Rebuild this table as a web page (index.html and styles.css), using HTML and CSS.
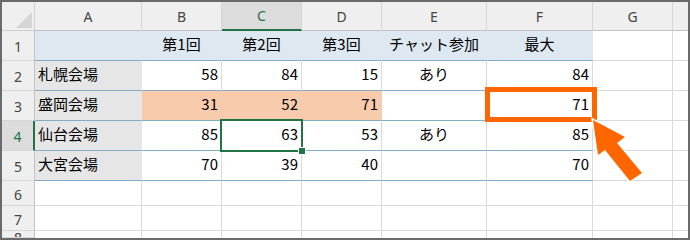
FILE: index.html
```html
<!DOCTYPE html>
<html lang="ja">
<head>
<meta charset="utf-8">
<link rel="stylesheet" href="styles.css">
</head>
<body>
<div class="sheet">
  <div class="grid">
    <div class="c corner"><div class="tri"></div></div>
    <div class="c ch">A</div>
    <div class="c ch">B</div>
    <div class="c ch csel">C</div>
    <div class="c ch">D</div>
    <div class="c ch">E</div>
    <div class="c ch">F</div>
    <div class="c ch">G</div>
    <div class="c ch last"></div>

    <div class="c rh">1</div>
    <div class="c hd"></div>
    <div class="c hd ctr">第1回</div>
    <div class="c hd ctr">第2回</div>
    <div class="c hd ctr">第3回</div>
    <div class="c hd ctr">チャット参加</div>
    <div class="c hd ctr">最大</div>
    <div class="c"></div>
    <div class="c last"></div>

    <div class="c rh">2</div>
    <div class="c lbl">札幌会場</div>
    <div class="c tb num">58</div>
    <div class="c tb num">84</div>
    <div class="c tb num">15</div>
    <div class="c tb ctr">あり</div>
    <div class="c tb num">84</div>
    <div class="c"></div>
    <div class="c last"></div>

    <div class="c rh">3</div>
    <div class="c lbl">盛岡会場</div>
    <div class="c peach num">31</div>
    <div class="c peach num">52</div>
    <div class="c peach num">71</div>
    <div class="c tb"></div>
    <div class="c tb num">71</div>
    <div class="c"></div>
    <div class="c last"></div>

    <div class="c rh rsel">4</div>
    <div class="c lbl">仙台会場</div>
    <div class="c tb num">85</div>
    <div class="c tb num">63</div>
    <div class="c tb num">53</div>
    <div class="c tb ctr">あり</div>
    <div class="c tb num">85</div>
    <div class="c"></div>
    <div class="c last"></div>

    <div class="c rh">5</div>
    <div class="c lbl">大宮会場</div>
    <div class="c tb num">70</div>
    <div class="c tb num">39</div>
    <div class="c tb num">40</div>
    <div class="c tb"></div>
    <div class="c tb num">70</div>
    <div class="c"></div>
    <div class="c last"></div>

    <div class="c rh">6</div>
    <div class="c"></div>
    <div class="c"></div>
    <div class="c"></div>
    <div class="c"></div>
    <div class="c"></div>
    <div class="c"></div>
    <div class="c"></div>
    <div class="c last"></div>

    <div class="c rh">7</div>
    <div class="c"></div>
    <div class="c"></div>
    <div class="c"></div>
    <div class="c"></div>
    <div class="c"></div>
    <div class="c"></div>
    <div class="c"></div>
    <div class="c last"></div>

    <div class="c rh cut"><span>8</span></div>
    <div class="c cutrow"></div>
    <div class="c cutrow"></div>
    <div class="c cutrow"></div>
    <div class="c cutrow"></div>
    <div class="c cutrow"></div>
    <div class="c cutrow"></div>
    <div class="c cutrow"></div>
    <div class="c cutrow last"></div>
  </div>

  <div class="selection"><span class="handle"></span></div>
  <div class="highlight"></div>
  <svg class="arrow" width="690" height="240" viewBox="0 0 690 240">
    <polygon points="593,120 598,155 605,150 630,181 642,173 617,143 625,137" />
  </svg>
</div>
</body>
</html>
```

FILE: styles.css
```css
html, body {
  margin: 0;
  padding: 0;
  background: #ffffff;
}

.sheet {
  position: relative;
  width: 686px;
  height: 236px;
  border: 2px solid #6a6a6a;
  overflow: hidden;
  font-family: "Noto Sans CJK JP", "Noto Sans", sans-serif;
}

.grid {
  display: grid;
  grid-template-columns: 33px 107px 80px 80px 80px 105px 106px 80px 15px;
  grid-template-rows: 29px 30px 30px 30px 30px 30px 25px 25px 7px;
}

.c {
  box-sizing: border-box;
  border-right: 1px solid #dadada;
  border-bottom: 1px solid #dadada;
  display: flex;
  align-items: center;
  padding: 0 3px 3px 3px;
  font-size: 15px;
  line-height: 18px;
  color: #000;
  white-space: nowrap;
  overflow: hidden;
}

.last { border-right: none; }
.cutrow { border-bottom: none; }

.num { justify-content: flex-end; }
.ctr { justify-content: center; }

.corner {
  background: #efefef;
  border-right-color: #cfcfcf;
  border-bottom-color: #cfcfcf;
  justify-content: flex-end;
  align-items: flex-end;
  padding: 0 2px 2px 0;
}

.tri {
  width: 16px;
  height: 16px;
  background: #d5d5d5;
  clip-path: polygon(100% 0, 100% 100%, 0 100%);
}

.ch {
  background: #efefef;
  justify-content: center;
  font-family: "Noto Sans", "Open Sans", sans-serif;
  font-size: 14px;
  color: #444444;
  padding: 1px 0 0 0;
  border-right-color: #d6d6d6;
  border-bottom-color: #c2c2c2;
}

.ch.last { background: #efefef; }

.csel {
  background: #dcdcdc;
  color: #217346;
  border-bottom: 2px solid #217346;
}

.rh {
  background: #efefef;
  justify-content: center;
  font-family: "Noto Sans", "Open Sans", sans-serif;
  font-size: 14px;
  color: #444444;
  padding: 3px 0 0 0;
  border-right-color: #c2c2c2;
  border-bottom-color: #d6d6d6;
}

.rsel {
  background: #dcdcdc;
  color: #217346;
  border-right: 2px solid #217346;
}

.rh.cut {
  align-items: flex-start;
  padding: 0;
}

.rh.cut span {
  display: block;
  margin-top: 0px;
  line-height: 14px;
}

.hd {
  background: #dde8f1;
  border-right-color: #dde8f1;
  border-bottom-color: #86abc6;
}

.lbl {
  background: #e7e6e6;
  border-right-color: #e7e6e6;
  border-bottom-color: #86abc6;
}

.peach {
  background: #f9cbad;
  border-right-color: #f9cbad;
  border-bottom-color: #86abc6;
}

.tb { border-bottom-color: #86abc6; }

.selection {
  position: absolute;
  left: 218px;
  top: 117px;
  width: 83px;
  height: 33px;
  box-sizing: border-box;
  border: 2px solid #217346;
}

.handle {
  position: absolute;
  right: -4px;
  bottom: -4px;
  width: 6px;
  height: 6px;
  background: #217346;
  box-shadow: 0 0 0 1px #ffffff;
}

.highlight {
  position: absolute;
  left: 483px;
  top: 85px;
  width: 112px;
  height: 35px;
  box-sizing: border-box;
  border: 5px solid #ff6600;
}

.arrow {
  position: absolute;
  left: -2px;
  top: -2px;
  pointer-events: none;
}

.arrow polygon {
  fill: #ff6600;
  stroke: #ffffff;
  stroke-width: 3;
  stroke-linejoin: miter;
  paint-order: stroke fill;
}
```
